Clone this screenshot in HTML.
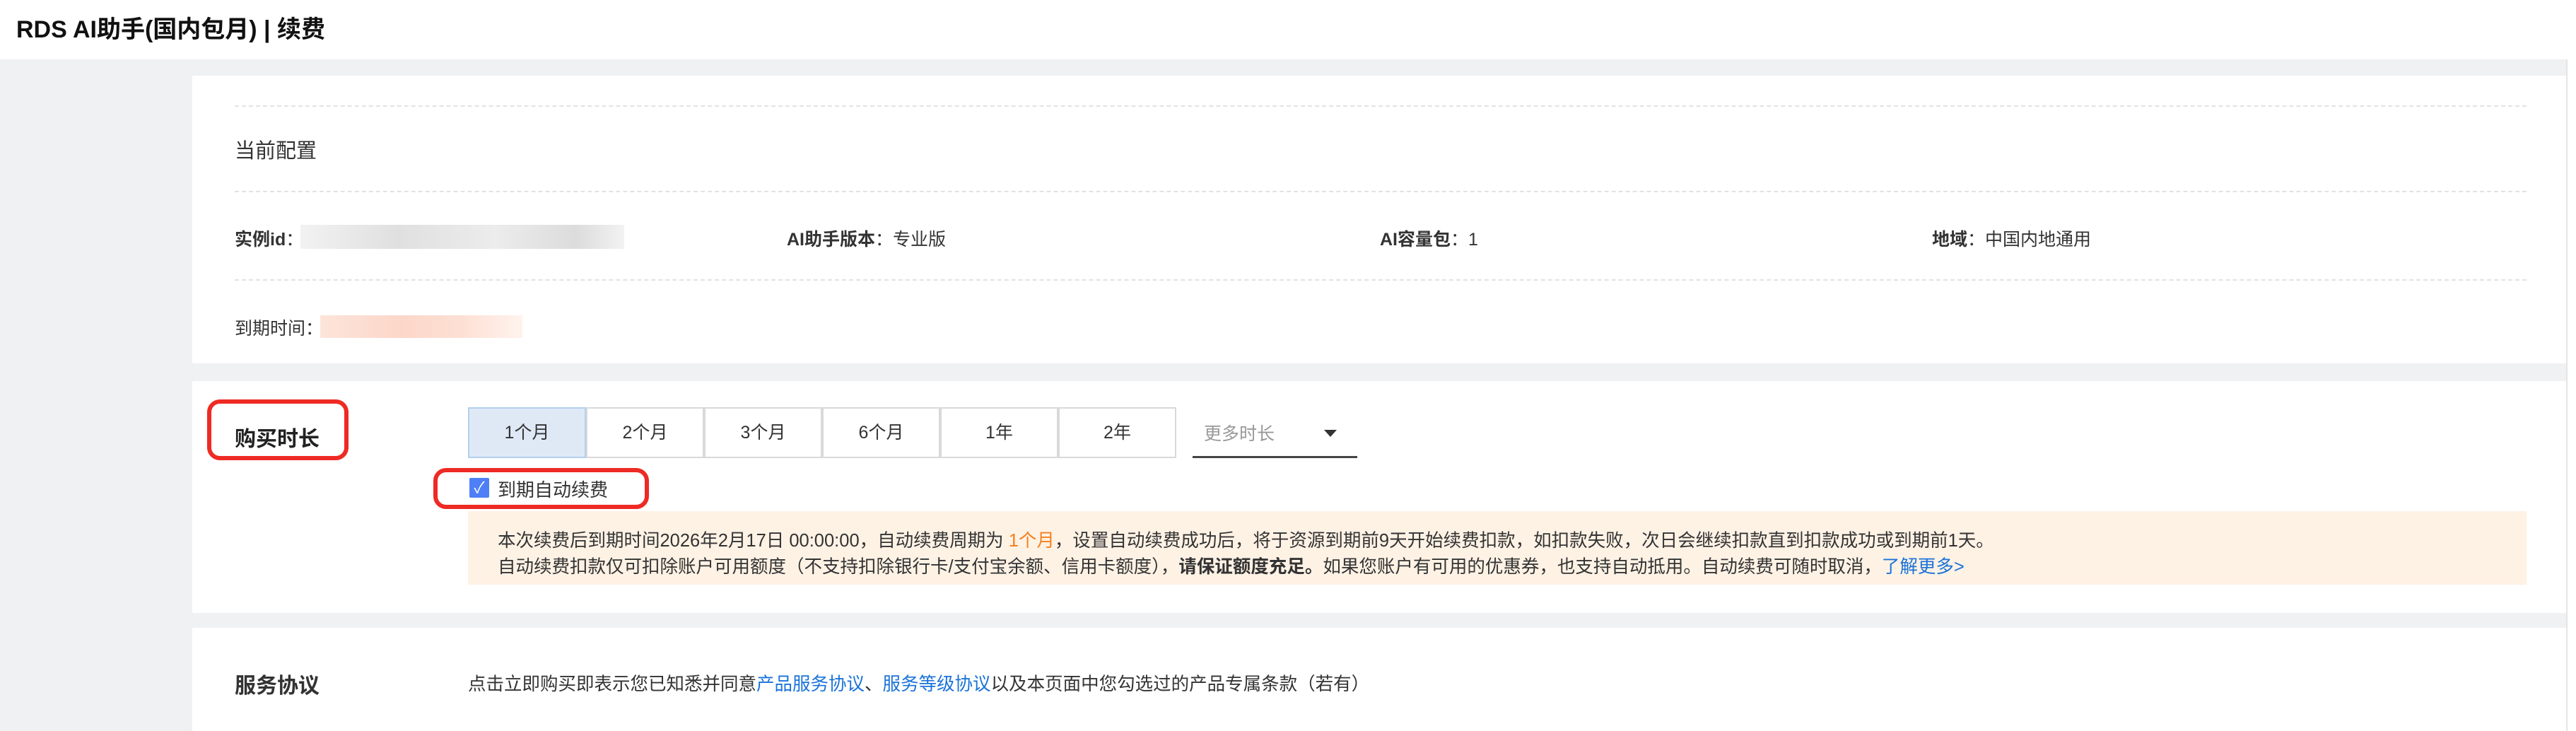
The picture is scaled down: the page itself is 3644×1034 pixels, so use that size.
<!DOCTYPE html>
<html><head><meta charset="utf-8"><style>
*{margin:0;padding:0;box-sizing:border-box}
body{width:3644px;height:1034px;overflow:hidden;background:#f0f1f3;font-family:"Liberation Sans","Noto Sans CJK SC",sans-serif;color:#333;position:relative}
.abs{position:absolute;white-space:nowrap}
.hdr{position:absolute;left:0;top:0;width:3644px;height:84px;background:#fff}
.card{position:absolute;left:272px;width:3358px;background:#fff}
.dash{position:absolute;left:332px;width:3242px;border-top:2px dashed #e2e2e2}
.lbl{font-size:25px;color:#333}
.lbl b{font-weight:bold}
.btn{position:absolute;top:576px;height:72px;width:167px;border:2px solid #d9d9d9;background:#fff;font-size:25px;color:#333;text-align:center;line-height:68px}
.red{position:absolute;border:6px solid #ee2a24;border-radius:18px}
</style></head><body>
<div class="hdr"></div>
<div class="abs" style="left:23px;top:14px;font-size:34px;font-weight:bold;color:#111">RDS AI助手(国内包月)&nbsp;|&nbsp;续费</div>
<div style="position:absolute;right:0;top:84px;width:14px;height:950px;background:#fff;border-left:2px solid #e5e5e5"></div>

<div class="card" style="top:107px;height:407px"></div>
<div class="dash" style="top:149px"></div>
<div class="abs" style="left:332px;top:190px;font-size:29px;color:#333">当前配置</div>
<div class="dash" style="top:270px"></div>
<div class="abs lbl" style="left:332px;top:319px"><b>实例id</b>：</div>
<div class="abs" style="left:425px;top:318px;width:458px;height:34px;background:linear-gradient(90deg,#f2f2f2,#e0e0e0 30%,#ececec 60%,#dcdcdc 85%,#f2f2f2)"></div>
<div class="abs lbl" style="left:1113px;top:319px"><b>AI助手版本</b>：专业版</div>
<div class="abs lbl" style="left:1952px;top:319px"><b>AI容量包</b>：1</div>
<div class="abs lbl" style="left:2733px;top:319px"><b>地域</b>：中国内地通用</div>
<div class="dash" style="top:395px"></div>
<div class="abs lbl" style="left:332px;top:445px">到期时间：</div>
<div class="abs" style="left:453px;top:446px;width:286px;height:32px;background:linear-gradient(90deg,#fde4da,#fcd7c9 40%,#fde0d4 70%,#fff3ee)"></div>

<div class="card" style="top:539px;height:328px"></div>
<div class="abs" style="left:332px;top:596px;font-size:30px;font-weight:bold;color:#222">购买时长</div>
<div class="red" style="left:293px;top:565px;width:200px;height:86px"></div>
<div class="btn" style="left:662px;background:#dfe9f6;border-color:#b4d0ee;z-index:1">1个月</div>
<div class="btn" style="left:829px">2个月</div>
<div class="btn" style="left:996px">3个月</div>
<div class="btn" style="left:1163px">6个月</div>
<div class="btn" style="left:1330px">1年</div>
<div class="btn" style="left:1497px">2年</div>
<div class="abs" style="left:1687px;top:576px;width:233px;height:72px;border-bottom:3px solid #444"></div>
<div class="abs" style="left:1703px;top:594px;font-size:25px;color:#999">更多时长</div>
<div class="abs" style="left:1873px;top:608px;width:0;height:0;border-left:9px solid transparent;border-right:9px solid transparent;border-top:10px solid #333"></div>

<div class="red" style="left:613px;top:662px;width:305px;height:58px"></div>
<div class="abs" style="left:664px;top:676px;width:28px;height:28px;background:#4e7ff7;border-radius:2px;color:#fff;font-size:22px;line-height:28px;text-align:center">✓</div>
<div class="abs" style="left:704px;top:673px;font-size:26px;color:#333">到期自动续费</div>

<div class="abs" style="left:662px;top:723px;width:2912px;height:104px;background:#fef2e5"></div>
<div class="abs" style="left:704px;top:744px;font-size:25.5px;color:#333">本次续费后到期时间2026年2月17日 00:00:00，自动续费周期为 <span style="color:#f5811f">1个月</span>，设置自动续费成功后，将于资源到期前9天开始续费扣款，如扣款失败，次日会继续扣款直到扣款成功或到期前1天。</div>
<div class="abs" style="left:704px;top:781px;font-size:25.5px;color:#333">自动续费扣款仅可扣除账户可用额度（不支持扣除银行卡/支付宝余额、信用卡额度），<b>请保证额度充足。</b>如果您账户有可用的优惠券，也支持自动抵用。自动续费可随时取消，<span style="color:#1a73d9">了解更多&gt;</span></div>

<div class="card" style="top:888px;height:146px"></div>
<div class="abs" style="left:332px;top:945px;font-size:30px;font-weight:bold;color:#333">服务协议</div>
<div class="abs" style="left:662px;top:947px;font-size:25.5px;color:#333">点击立即购买即表示您已知悉并同意<span style="color:#1a73d9">产品服务协议</span>、<span style="color:#1a73d9">服务等级协议</span>以及本页面中您勾选过的产品专属条款（若有）</div>
</body></html>
